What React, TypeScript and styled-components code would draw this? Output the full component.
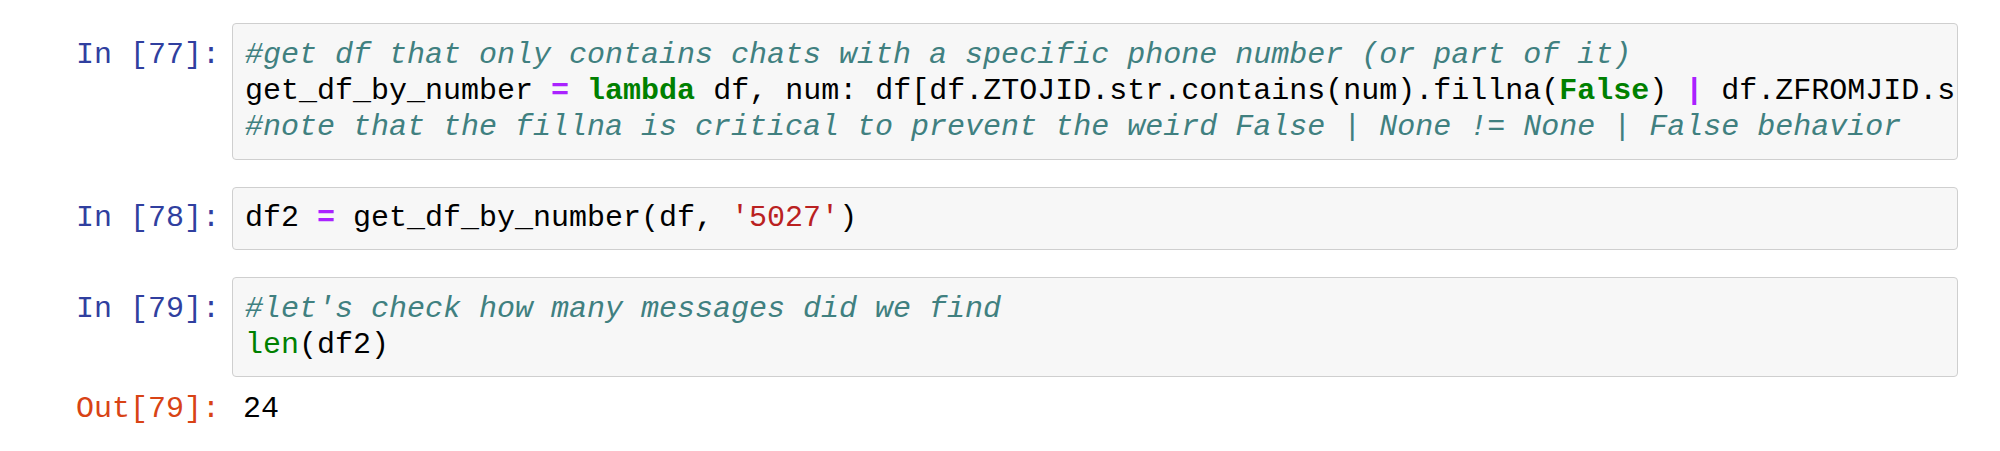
import React from "react";
import styled, { createGlobalStyle } from "styled-components";

const GlobalStyle = createGlobalStyle`
  html, body {
    margin: 0;
    padding: 0;
    background: #ffffff;
  }
  body {
    font-family: "Liberation Mono", "DejaVu Sans Mono", monospace;
  }
`;

const Notebook = styled.div`
  display: flex;
  flex-direction: column;
  gap: 27px;
  padding-top: 23px;
`;

const Cell = styled.div`
  display: flex;
  flex-direction: column;
`;

const Row = styled.div<{ $output?: boolean }>`
  display: flex;
  align-items: flex-start;
  padding-top: ${(p) => (p.$output ? "14px" : "0")};
`;

const Prompt = styled.div<{ $kind: "in" | "out" }>`
  flex: none;
  width: 220px;
  padding-right: 12px;
  padding-top: ${(p) => (p.$kind === "in" ? "13.6px" : "0")};
  text-align: right;
  white-space: pre;
  font-family: "Liberation Mono", "DejaVu Sans Mono", monospace;
  font-size: 30px;
  line-height: 36.43px;
  color: ${(p) => (p.$kind === "in" ? "#303F9F" : "#D84315")};
`;

const InputArea = styled.div`
  flex: 1;
  min-width: 0;
  margin-right: 42px;
  border: 1px solid #cfcfcf;
  border-radius: 4px;
  background: #f7f7f7;
  padding: 12.6px 12px;
  overflow: hidden;
`;

const Code = styled.pre`
  margin: 0;
  font-family: "Liberation Mono", "DejaVu Sans Mono", monospace;
  font-size: 30px;
  line-height: 36.43px;
  color: #000000;
  white-space: pre;
`;

const OutputArea = styled.div`
  flex: 1;
  padding-left: 11px;
  font-family: "Liberation Mono", "DejaVu Sans Mono", monospace;
  font-size: 30px;
  line-height: 36.43px;
  color: #000000;
  white-space: pre;
`;

const Comment = styled.span`
  color: #408080;
  font-style: italic;
`;

const Keyword = styled.span`
  color: #008000;
  font-weight: bold;
`;

const Builtin = styled.span`
  color: #008000;
`;

const Operator = styled.span`
  color: #aa22ff;
  font-weight: bold;
`;

const Str = styled.span`
  color: #ba2121;
`;

export default function App() {
  return (
    <>
      <GlobalStyle />
      <Notebook>
        <Cell>
          <Row>
            <Prompt $kind="in">In [77]:</Prompt>
            <InputArea>
              <Code>
                <Comment>
                  #get df that only contains chats with a specific phone number (or part of it)
                </Comment>
                {"\n"}
                {"get_df_by_number "}
                <Operator>=</Operator> <Keyword>lambda</Keyword>
                {" df, num: df[df.ZTOJID.str.contains(num).fillna("}
                <Keyword>False</Keyword>
                {") "}
                <Operator>|</Operator>
                {" df.ZFROMJID.s"}
                {"\n"}
                <Comment>
                  #note that the fillna is critical to prevent the weird False | None != None | False behavior
                </Comment>
              </Code>
            </InputArea>
          </Row>
        </Cell>
        <Cell>
          <Row>
            <Prompt $kind="in">In [78]:</Prompt>
            <InputArea>
              <Code>
                {"df2 "}
                <Operator>=</Operator>
                {" get_df_by_number(df, "}
                <Str>'5027'</Str>
                {")"}
              </Code>
            </InputArea>
          </Row>
        </Cell>
        <Cell>
          <Row>
            <Prompt $kind="in">In [79]:</Prompt>
            <InputArea>
              <Code>
                <Comment>#let's check how many messages did we find</Comment>
                {"\n"}
                <Builtin>len</Builtin>
                {"(df2)"}
              </Code>
            </InputArea>
          </Row>
          <Row $output>
            <Prompt $kind="out">Out[79]:</Prompt>
            <OutputArea>24</OutputArea>
          </Row>
        </Cell>
      </Notebook>
    </>
  );
}
